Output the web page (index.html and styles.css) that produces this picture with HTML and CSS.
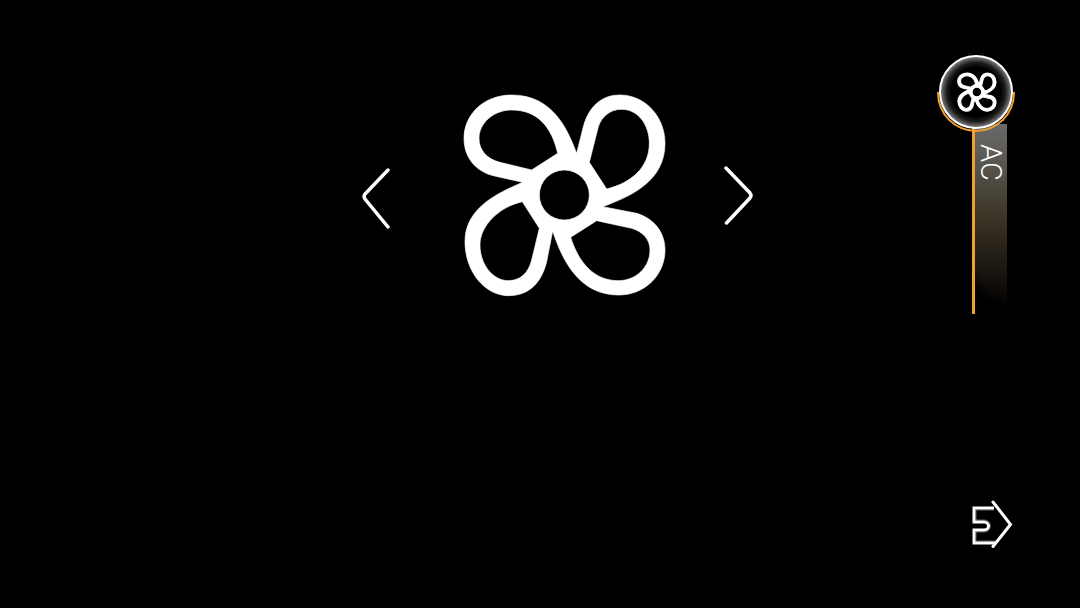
FILE: index.html
```html
<!DOCTYPE html>
<html lang="en">
<head>
    <meta charset="UTF-8">
    <meta name="viewport" content="width=device-width, initial-scale=1.0">
    <title>Fan</title>
    <link rel="stylesheet" href="styles.css">
</head>
<body>
    <svg class="defs" width="0" height="0">
        <defs>
            <path id="fan" fill-rule="evenodd" d="M380 205C355 140 312 30 185 30C100 30 42 90 42 160C42 220 80 260 130 272L218 292C140 325 45 370 45 470C45 560 105 632 175 632C240 632 275 590 290 530L308 438C335 520 385 630 505 630C590 630 645 565 645 495C645 440 610 400 560 385L458 365C540 335 645 290 645 175C645 95 585 30 510 30C450 30 415 70 400 125Z
            M323 205C305 125 262 75 185 75C130 75 87 115 87 160C87 195 110 222 150 232L245 255Z
            M418 232L445 125C455 95 480 73 515 73C565 73 598 120 598 175C598 250 540 295 470 312Z
            M217 350C150 365 90 420 90 480C90 540 130 587 175 587C210 587 235 565 245 525L268 430Z
            M362 457C385 530 430 587 505 587C560 587 600 545 600 495C600 465 580 440 545 430L440 407Z
            M268 330A75 75 0 1 0 418 330A75 75 0 1 0 268 330Z"/>
        </defs>
    </svg>

    <div class="screen">
        <main class="stage">
            <svg class="chevron" width="30" height="66" viewBox="0 0 30 66">
                <path d="M28 5L5 29Q3.200 31.500 5 34L28 62"/>
            </svg>
            <svg class="fan-big" width="225" height="225" viewBox="0 0 675 675"><use href="#fan"/></svg>
            <svg class="chevron" width="30" height="66" viewBox="0 0 30 66">
                <path d="M3 3L27 28Q29 30.500 27 33L3.500 58"/>
            </svg>
        </main>

        <aside class="side">
            <div class="tab">
                <div class="knob">
                    <svg class="fan-small" width="43" height="43" viewBox="0 0 675 675"><use href="#fan"/></svg>
                </div>
                <div class="bar"><span class="bar-label">AC</span></div>
            </div>
            <svg class="exit" width="44" height="54" viewBox="0 0 44 54">
                <path class="exit-shade" d="M24 13H6V23H14C22.500 23 22.500 35 14 35H6V44H25"/>
                <path d="M24 11H4V25H14C20 25 20 33 14 33H4V46H25"/>
                <path d="M23 5L40.500 27.500L23 49.500" stroke-linecap="round"/>
            </svg>
        </aside>
    </div>
</body>
</html>
```

FILE: styles.css
```css
html, body {
    margin: 0;
    padding: 0;
    background-color: #000;
}

.defs {
    display: block;
}

.screen {
    width: 1080px;
    height: 608px;
    display: flex;
    overflow: hidden;
    background-color: #000;
}

.stage {
    flex: 1;
    display: flex;
    align-items: flex-start;
    padding: 85px 0 0 360px;
    box-sizing: border-box;
}

.chevron {
    fill: none;
    stroke: #fff;
    stroke-width: 3.500;
    stroke-linecap: round;
    margin-top: 80px;
}

.fan-big {
    fill: #fff;
    stroke: #fff;
    stroke-width: 2;
    margin: 0 48px 0 60px;
}

.side {
    width: 144px;
    display: flex;
    flex-direction: column;
    justify-content: space-between;
    align-items: flex-start;
    box-sizing: border-box;
    padding: 55px 0 57px 3px;
}

.tab {
    position: relative;
    display: flex;
    flex-direction: column;
    align-items: flex-start;
}

.knob {
    position: relative;
    z-index: 1;
    width: 74px;
    height: 74px;
    box-sizing: border-box;
    border: 2.500px solid #fff;
    border-radius: 50%;
    background: radial-gradient(closest-side, #000 70%, #1c1c1c 84%, #777 100%);
    display: flex;
    align-items: center;
    justify-content: center;
}

.fan-small {
    fill: #fff;
    stroke: #fff;
    stroke-width: 16;
}

/* orange half ring round the lower half of the knob */
.knob::after {
    content: "";
    position: absolute;
    left: -4.500px;
    top: 34.500px;
    width: 78.500px;
    height: 40px;
    box-sizing: border-box;
    border: 2.500px solid #f0a030;
    border-top: none;
    border-radius: 0 0 40px 40px;
}

.bar {
    margin: -5px 0 0 33px;
    width: 35px;
    height: 190px;
    box-sizing: border-box;
    border-left: 3px solid #f0a030;
    background:
        linear-gradient(45deg, #000 16px, transparent 30px),
        linear-gradient(#696969 0%, #59574f 20%, #3a3325 50%, #1a1610 77%, #0a0805 90%, #000 96%);
    padding: 20px 0 0 0;
}

.bar-label {
    display: block;
    writing-mode: vertical-rl;
    font-family: Roboto, "Liberation Sans", sans-serif;
    font-weight: 300;
    font-size: 29px;
    line-height: 32px;
    color: #fff;
}

.exit {
    fill: none;
    stroke: #fff;
    stroke-width: 3;
    margin-left: 31px;
}

.exit-shade {
    stroke: #666;
    stroke-width: 1;
}
```
